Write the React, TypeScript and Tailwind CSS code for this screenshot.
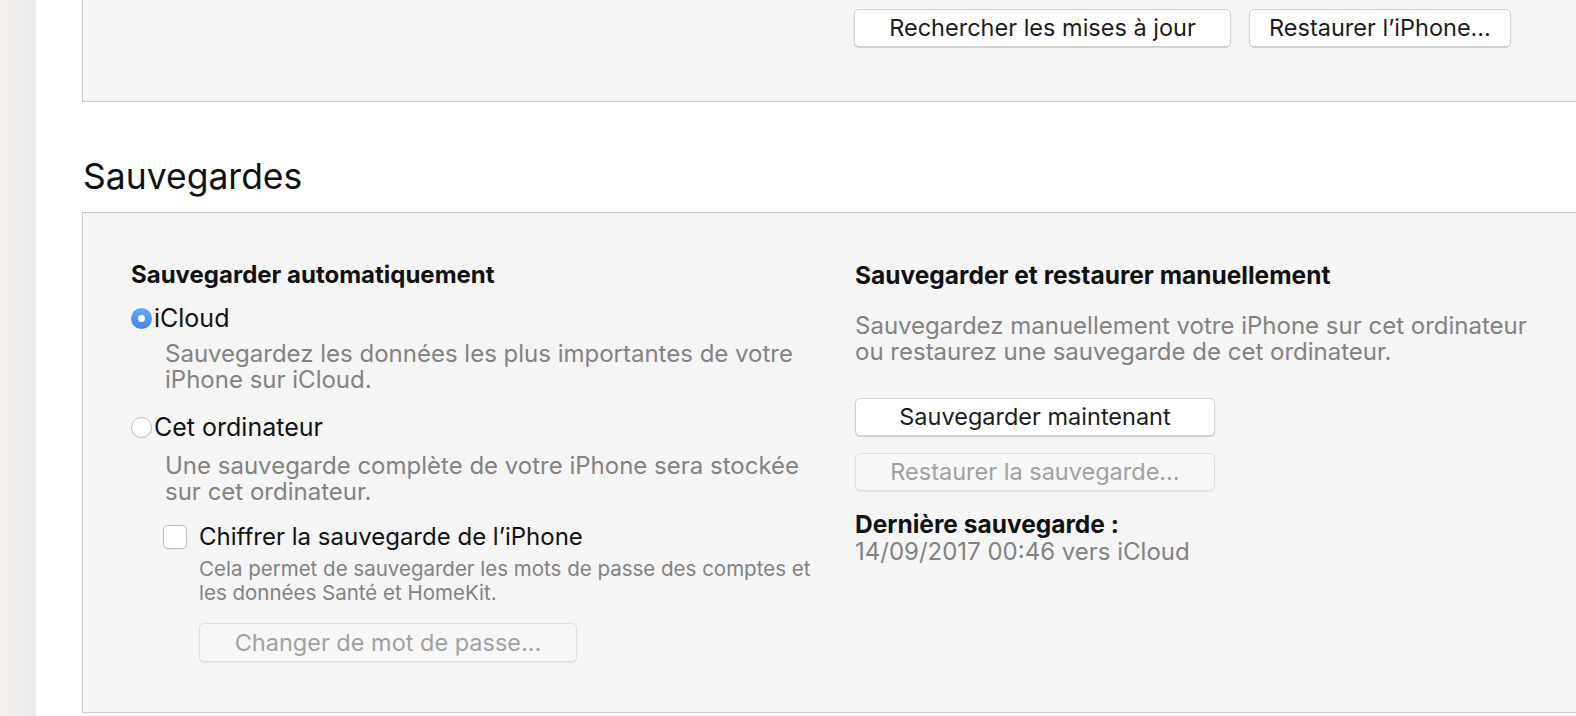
import React from 'react';

const FONT = { fontFamily: 'Inter, "Noto Sans", "Liberation Sans", sans-serif' };

function MacButton({
  children,
  disabled = false,
  className = '',
}: {
  children: React.ReactNode;
  disabled?: boolean;
  className?: string;
}) {
  return (
    <button
      type="button"
      className={
        'flex items-center justify-center rounded-[5px] border text-[23.5px] leading-none ' +
        (disabled
          ? 'border-[#dedede] bg-[#f7f7f7] text-[#a0a0a0] shadow-[0_1px_1px_rgba(0,0,0,0.06)] '
          : 'border-[#cfcfcf] bg-white text-[#1c1c1c] shadow-[0_1px_1px_rgba(0,0,0,0.16)] ') +
        className
      }
    >
      {children}
    </button>
  );
}

function Radio({ checked }: { checked: boolean }) {
  if (checked) {
    return (
      <span className="flex h-[21px] w-[21px] shrink-0 items-center justify-center rounded-full bg-gradient-to-b from-[#6aa9f6] to-[#3f86ea]">
        <span className="h-[7px] w-[7px] rounded-full bg-white" />
      </span>
    );
  }
  return (
    <span className="h-[21px] w-[21px] shrink-0 rounded-full border border-[#bcbcbc] bg-white shadow-[0_1px_1px_rgba(0,0,0,0.05)]" />
  );
}

export default function App() {
  return (
    <div className="flex h-[716px] w-[1576px] overflow-hidden bg-white" style={FONT}>
      {/* sidebar edge */}
      <div className="w-[36px] shrink-0 bg-gradient-to-r from-[#f2efec] to-[#ececec]" />

      <div className="min-w-0 flex-1 pl-[46px]">
        {/* Software box (cut at top) */}
        <section className="-mr-[12px] -mt-[4px] h-[106px] border border-[#c9c9c9] bg-[#f5f5f5] pl-[771px] pt-[12px]">
          <div className="flex gap-[18px]">
            <MacButton className="h-[38px] w-[377px]">Rechercher les mises à jour</MacButton>
            <MacButton className="h-[38px] w-[262px]">Restaurer l’iPhone…</MacButton>
          </div>
        </section>

        <h2 className="mt-[53px] mb-[13px] pl-[1px] text-[35.5px] leading-[44px] font-normal text-[#111]">Sauvegardes</h2>

        {/* Backups box */}
        <section className="-mr-[12px] grid h-[501px] grid-cols-[724px_1fr] border border-[#c9c9c9] bg-[#f5f5f5] pl-[48px] pt-[49px]">
          {/* automatic */}
          <div className="flex flex-col">
            <h3 className="text-[24px] leading-[26px] font-bold text-[#111]">Sauvegarder automatiquement</h3>

            <div className="mt-[17px] flex items-center gap-[2px] text-[25px] leading-[26px] text-[#111]">
              <Radio checked />
              <span>iCloud</span>
            </div>
            <p className="mt-[10px] pl-[34px] text-[24px] leading-[26px] text-[#828282]">
              Sauvegardez les données les plus importantes de votre
              <br />
              iPhone sur iCloud.
            </p>

            <div className="mt-[21px] flex items-center gap-[2px] text-[25px] leading-[26px] text-[#111]">
              <Radio checked={false} />
              <span>Cet ordinateur</span>
            </div>
            <p className="mt-[13px] pl-[34px] text-[24px] leading-[26px] text-[#828282]">
              Une sauvegarde complète de votre iPhone sera stockée
              <br />
              sur cet ordinateur.
            </p>

            <div className="mt-[19px] ml-[32px] flex items-center gap-[12px] text-[24px] leading-[26px] text-[#111]">
              <span className="h-[24px] w-[24px] shrink-0 rounded-[5px] border border-[#bcbcbc] bg-white shadow-[0_1px_1px_rgba(0,0,0,0.05)]" />
              <span>Chiffrer la sauvegarde de l’iPhone</span>
            </div>
            <p className="mt-[7px] pl-[68px] text-[20.5px] leading-[24px] text-[#828282]">
              Cela permet de sauvegarder les mots de passe des comptes et
              <br />
              les données Santé et HomeKit.
            </p>
            <div className="mt-[18px] pl-[68px]">
              <MacButton disabled className="h-[39px] w-[378px]">
                Changer de mot de passe…
              </MacButton>
            </div>
          </div>

          {/* manual */}
          <div className="flex flex-col">
            <h3 className="text-[24.5px] leading-[26px] font-bold text-[#111]">Sauvegarder et restaurer manuellement</h3>
            <p className="mt-[25px] text-[24px] leading-[26px] text-[#828282]">
              Sauvegardez manuellement votre iPhone sur cet ordinateur
              <br />
              ou restaurez une sauvegarde de cet ordinateur.
            </p>
            <MacButton className="mt-[33px] h-[38px] w-[360px]">Sauvegarder maintenant</MacButton>
            <MacButton disabled className="mt-[17px] h-[38px] w-[360px]">
              Restaurer la sauvegarde…
            </MacButton>
            <h3 className="mt-[20px] text-[24.5px] leading-[26px] font-bold text-[#111]">Dernière sauvegarde :</h3>
            <p className="mt-[2px] text-[24px] leading-[26px] text-[#828282]">14/09/2017 00:46 vers iCloud</p>
          </div>
        </section>
      </div>
    </div>
  );
}
